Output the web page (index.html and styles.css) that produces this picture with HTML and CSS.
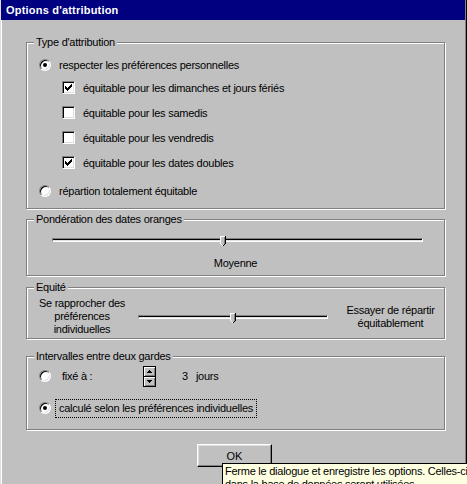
FILE: index.html
```html
<!DOCTYPE html>
<html lang="fr">

<head>
    <meta charset="UTF-8">
    <title>Options d'attribution</title>
    <link rel="stylesheet" href="styles.css">
</head>

<body>

    <div class="window">
        <div class="title-bar">Options d'attribution</div>

        <div class="dialog-body">

            <div class="group group-type">
                <div class="legend">Type d'attribution</div>
                <div class="row row-radio first">
                    <span class="radio checked"></span>
                    <span class="label">respecter les préférences personnelles</span>
                </div>
                <div class="row row-check">
                    <span class="checkbox checked">
                        <svg width="7" height="7" viewBox="0 0 7 7" shape-rendering="crispEdges">
                            <rect x="0" y="2" width="1" height="3" />
                            <rect x="1" y="3" width="1" height="3" />
                            <rect x="2" y="4" width="1" height="3" />
                            <rect x="3" y="3" width="1" height="3" />
                            <rect x="4" y="2" width="1" height="3" />
                            <rect x="5" y="1" width="1" height="3" />
                            <rect x="6" y="0" width="1" height="3" />
                        </svg>
                    </span>
                    <span class="label">équitable pour les dimanches et jours fériés</span>
                </div>
                <div class="row row-check">
                    <span class="checkbox"></span>
                    <span class="label">équitable pour les samedis</span>
                </div>
                <div class="row row-check">
                    <span class="checkbox"></span>
                    <span class="label">équitable pour les vendredis</span>
                </div>
                <div class="row row-check">
                    <span class="checkbox checked">
                        <svg width="7" height="7" viewBox="0 0 7 7" shape-rendering="crispEdges">
                            <rect x="0" y="2" width="1" height="3" />
                            <rect x="1" y="3" width="1" height="3" />
                            <rect x="2" y="4" width="1" height="3" />
                            <rect x="3" y="3" width="1" height="3" />
                            <rect x="4" y="2" width="1" height="3" />
                            <rect x="5" y="1" width="1" height="3" />
                            <rect x="6" y="0" width="1" height="3" />
                        </svg>
                    </span>
                    <span class="label">équitable pour les dates doubles</span>
                </div>
                <div class="row row-radio last">
                    <span class="radio"></span>
                    <span class="label">répartion totalement équitable</span>
                </div>
            </div>

            <div class="group group-weight">
                <div class="legend">Pondération des dates oranges</div>
                <div class="slider slider-weight">
                    <div class="track"></div>
                    <svg class="thumb" style="left: 46%;" width="6" height="11" viewBox="0 0 6 11" shape-rendering="crispEdges">
                        <polygon points="0,0 6,0 6,7 3,11 0,7" fill="#c0c0c0" />
                        <rect x="0" y="0" width="5" height="1" fill="#fff" />
                        <rect x="0" y="0" width="1" height="8" fill="#fff" />
                        <rect x="4" y="1" width="1" height="7" fill="#808080" />
                        <rect x="5" y="0" width="1" height="8" fill="#000" />
                        <rect x="4" y="8" width="1" height="1" fill="#000" />
                        <rect x="3" y="9" width="1" height="1" fill="#000" />
                        <rect x="1" y="8" width="1" height="1" fill="#fff" />
                        <rect x="2" y="9" width="1" height="1" fill="#fff" />
                    </svg>
                </div>
                <div class="slider-caption">Moyenne</div>
            </div>

            <div class="group group-equity">
                <div class="legend">Equité</div>
                <div class="equity-row">
                    <div class="equity-label left">Se rapprocher des<br>préférences<br>individuelles</div>
                    <div class="slider slider-equity">
                        <div class="track"></div>
                        <svg class="thumb" style="left: 50%;" width="6" height="11" viewBox="0 0 6 11" shape-rendering="crispEdges">
                            <polygon points="0,0 6,0 6,7 3,11 0,7" fill="#c0c0c0" />
                            <rect x="0" y="0" width="5" height="1" fill="#fff" />
                            <rect x="0" y="0" width="1" height="8" fill="#fff" />
                            <rect x="4" y="1" width="1" height="7" fill="#808080" />
                            <rect x="5" y="0" width="1" height="8" fill="#000" />
                            <rect x="4" y="8" width="1" height="1" fill="#000" />
                            <rect x="3" y="9" width="1" height="1" fill="#000" />
                            <rect x="1" y="8" width="1" height="1" fill="#fff" />
                            <rect x="2" y="9" width="1" height="1" fill="#fff" />
                        </svg>
                    </div>
                    <div class="equity-label right">Essayer de répartir<br>équitablement</div>
                </div>
            </div>

            <div class="group group-interval">
                <div class="legend">Intervalles entre deux gardes</div>
                <div class="row interval-row first">
                    <span class="radio"></span>
                    <span class="label fixed-label">fixé à :</span>
                    <div class="spin">
                        <div class="spin-btn">
                            <svg width="5" height="3" viewBox="0 0 5 3" shape-rendering="crispEdges">
                                <polygon points="2.5,0 5,3 0,3" />
                            </svg>
                        </div>
                        <div class="spin-btn down">
                            <svg width="5" height="3" viewBox="0 0 5 3" shape-rendering="crispEdges">
                                <polygon points="0,0 5,0 2.5,3" />
                            </svg>
                        </div>
                    </div>
                    <span class="spin-value">3</span>
                    <span class="unit">jours</span>
                </div>
                <div class="row interval-row second">
                    <span class="radio checked"></span>
                    <span class="label focused">calculé selon les préférences individuelles</span>
                </div>
            </div>

            <button class="ok-button">OK</button>
        </div>
    </div>

    <div class="tooltip">Ferme le dialogue et enregistre les options. Celles-ci<br>dans la base de données seront utilisées.</div>

</body>

</html>
```

FILE: styles.css
```css
* {
    box-sizing: border-box;
}

body {
    margin: 0;
    width: 467px;
    height: 484px;
    overflow: hidden;
    position: relative;
    background-color: #c0c0c0;
    font-family: 'Liberation Sans', Arial, sans-serif;
    font-size: 11px;
    letter-spacing: -0.25px;
    color: #000;
}

.window {
    height: 484px;
    border-left: 1px solid #dfdfdf;
    border-right: 1px solid #000;
    box-shadow: inset 1px 0 #fff, inset -1px 0 #808080;
    padding-right: 1px;
}

.title-bar {
    height: 20px;
    line-height: 20px;
    padding-left: 5px;
    background-color: #000080;
    color: #fff;
    font-weight: bold;
    letter-spacing: 0.2px;
}

.dialog-body {
    padding: 22px 0 0 25px;
    display: flex;
    flex-direction: column;
    align-items: flex-start;
}

/* group boxes */

.group {
    width: 419px;
    border: 1px solid #808080;
    box-shadow: inset 1px 1px #fff, 1px 1px #fff;
}

.legend {
    width: fit-content;
    height: 13px;
    line-height: 13px;
    margin: -7px 0 0 7px;
    padding: 0 2px;
    background-color: #c0c0c0;
}

.row {
    display: flex;
    align-items: center;
}

.row-radio {
    height: 21px;
    padding-left: 12px;
}

.row-radio.first {
    margin-top: 5px;
}

.row-radio.last {
    height: 20px;
    margin-top: 6px;
}

.row-radio .label {
    margin-left: 8px;
}

.row-check {
    height: 25px;
    padding-left: 35px;
}

.row-check .label {
    margin-left: 8px;
}

.group-type {
    padding-bottom: 7px;
}

/* radio / checkbox */

.radio {
    width: 12px;
    height: 12px;
    flex: none;
    position: relative;
    border-radius: 50%;
    border: 1px solid;
    border-color: #808080 #fff #fff #808080;
    background-color: #fff;
    box-shadow: inset 1px 1px #000, inset -1px -1px #dfdfdf;
}

.radio.checked::after {
    content: '';
    position: absolute;
    left: 3px;
    top: 3px;
    width: 4px;
    height: 4px;
    border-radius: 50%;
    background-color: #000;
}

.checkbox {
    width: 13px;
    height: 13px;
    flex: none;
    display: flex;
    align-items: center;
    justify-content: center;
    border: 1px solid;
    border-color: #808080 #fff #fff #808080;
    background-color: #fff;
    box-shadow: inset 1px 1px #000, inset -1px -1px #dfdfdf;
}

/* sliders */

.slider {
    position: relative;
    height: 18px;
    display: flex;
    align-items: center;
}

.track {
    width: 100%;
    height: 4px;
    border: 1px solid;
    border-color: #808080 #fff #fff #808080;
    background: linear-gradient(#000 50%, #dfdfdf 50%);
}

.thumb {
    position: absolute;
    top: 5px;
    margin-left: -3px;
}

.slider-weight {
    width: 371px;
    margin: 5px 0 0 25px;
}

.slider-caption {
    margin-top: 8px;
    line-height: 13px;
    text-align: center;
}

.group-weight {
    margin-top: 10px;
    padding-bottom: 5px;
}

.group-equity {
    margin-top: 11px;
    padding-bottom: 2px;
}

.equity-row {
    display: flex;
    align-items: center;
    height: 39px;
    margin-top: 3px;
}

.equity-label {
    line-height: 13px;
    text-align: center;
}

.equity-label.left {
    width: 110px;
}

.slider-equity {
    width: 190px;
    margin-left: 1px;
}

.equity-label.right {
    flex: 1;
    margin-left: 9px;
}

/* interval group */

.group-interval {
    margin-top: 17px;
    padding-bottom: 11px;
}

.interval-row {
    height: 20px;
    padding-left: 12px;
}

.interval-row.first {
    margin-top: 3px;
}

.interval-row.second {
    margin-top: 12px;
}

.fixed-label {
    width: 81px;
    margin-left: 11px;
}

.spin {
    width: 13px;
    height: 21px;
    border: 1px solid #000;
    display: flex;
    flex-direction: column;
}

.spin-btn {
    height: 9px;
    display: flex;
    align-items: center;
    justify-content: center;
    background-color: #c0c0c0;
    box-shadow: inset 1px 1px #fff, inset -1px -1px #808080;
}

.spin-btn.down {
    height: 10px;
    border-top: 1px solid #000;
}

.spin-value {
    margin-left: 26px;
}

.unit {
    margin-left: 8px;
}

.label.focused {
    margin-left: 4px;
    padding: 2px 3px;
    line-height: 13px;
    border: 1px dotted #000;
}

/* button + tooltip */

.ok-button {
    width: 75px;
    height: 23px;
    margin: 14px 0 0 171px;
    padding: 0;
    font-family: inherit;
    font-size: 11px;
    color: #000;
    background-color: #c0c0c0;
    border: 1px solid;
    border-color: #fff #000 #000 #fff;
    box-shadow: inset -1px -1px #808080, inset 1px 1px #dfdfdf;
    border-radius: 0;
}

.tooltip {
    position: absolute;
    left: 222px;
    top: 463px;
    width: 250px;
    padding: 1px 2px;
    line-height: 13px;
    white-space: nowrap;
    background-color: #ffffe1;
    border: 1px solid #000;
}
```
